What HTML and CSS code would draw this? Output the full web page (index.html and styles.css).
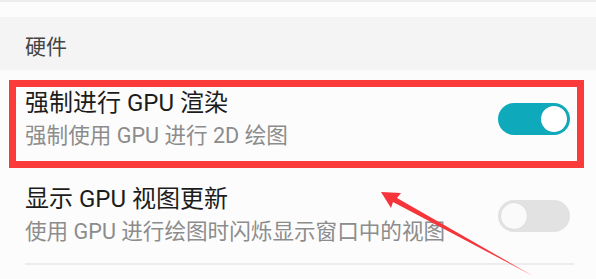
FILE: index.html
```html
<!DOCTYPE html>
<html lang="zh-CN">
<head>
    <meta charset="UTF-8">
    <meta name="viewport" content="width=device-width, initial-scale=1.0">
    <title>硬件</title>
    <link rel="stylesheet" href="styles.css">
</head>
<body>
    <div class="top-strip"></div>
    <div class="gap"></div>

    <div class="section-header">硬件</div>

    <div class="pref-row">
        <div class="pref-text">
            <div class="pref-title">强制进行 GPU 渲染</div>
            <div class="pref-summary">强制使用 GPU 进行 2D 绘图</div>
        </div>
        <div class="switch on"><span class="knob"></span></div>
    </div>

    <div class="pref-row">
        <div class="pref-text">
            <div class="pref-title">显示 GPU 视图更新</div>
            <div class="pref-summary">使用 GPU 进行绘图时闪烁显示窗口中的视图</div>
        </div>
        <div class="switch"><span class="knob"></span></div>
    </div>
    <div class="divider"></div>

    <!-- annotation overlay -->
    <div class="highlight-box"></div>
    <svg class="arrow" width="596" height="279" viewBox="0 0 596 279">
        <polygon points="381,192 401,193 397,198 533,276 393,202 391,208" fill="#f5353a"/>
    </svg>
</body>
</html>
```

FILE: styles.css
```css
body { margin: 0; background: #fcfcfc; font-family: Roboto, "Noto Sans CJK SC", sans-serif; position: relative; height: 279px; overflow: hidden; }
.top-strip { height: 2px; background: #ececec; }
.gap { height: 15px; }
.section-header { height: 53px; box-sizing: border-box; padding: 18px 0 0 25px; background: #f4f4f4; color: #444; font-size: 21px; line-height: 25px; }
.pref-row { display: flex; align-items: center; justify-content: space-between; height: 98px; box-sizing: border-box; padding: 0 26px 0 25px; }
.pref-row + .pref-row { height: 95px; }
.pref-title { font-size: 24px; line-height: 30px; color: #1c1c1c; }
.pref-summary { font-size: 21.6px; line-height: 30px; margin-top: 3px; color: #8c8c8c; }
.switch { width: 72px; height: 32px; border-radius: 16px; background: #e2e2e2; position: relative; flex-shrink: 0; }
.switch .knob { position: absolute; top: 3px; left: 3px; width: 26px; height: 26px; border-radius: 50%; background: #fafafa; box-shadow: 0 0 1px rgba(0,0,0,0.15); }
.switch.on { background: #0eaabc; }
.switch.on .knob { left: auto; right: 3px; background: #fff; }
.divider { height: 2px; background: #ececec; margin: 0 22px 0 25px; }
.highlight-box { position: absolute; left: 9px; top: 80px; width: 575px; height: 88px; box-sizing: border-box; border: 7px solid #fb3a3a; }
.arrow { position: absolute; left: 0; top: 0; }
```
